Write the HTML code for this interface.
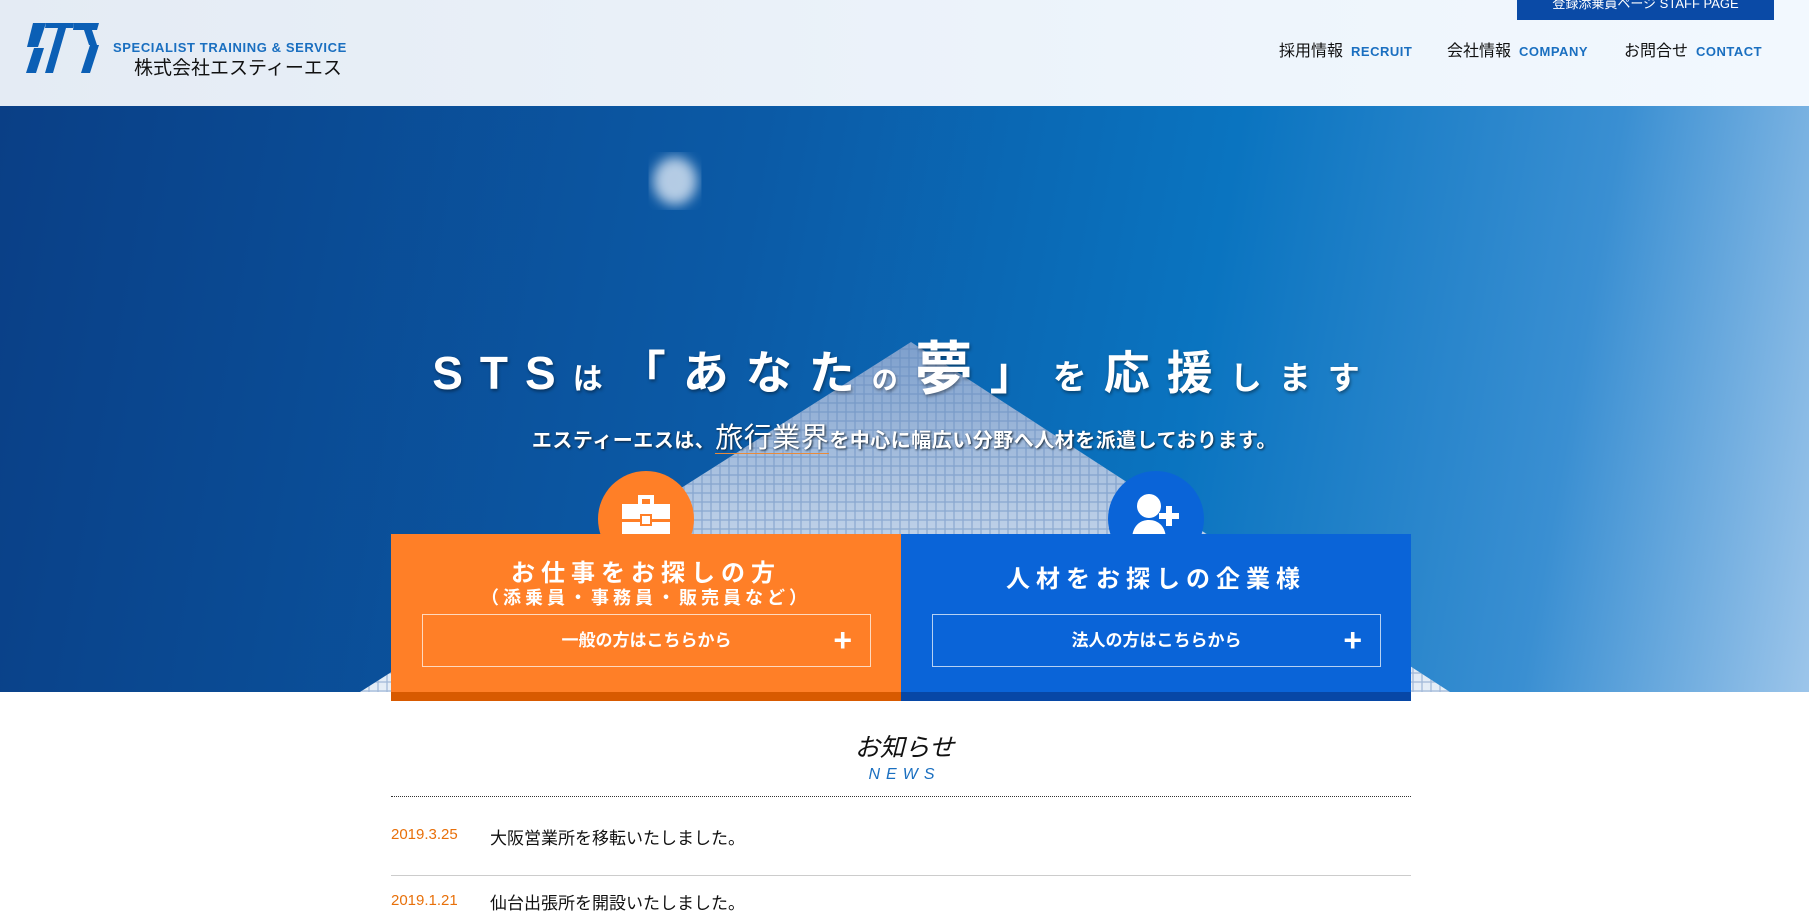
<!DOCTYPE html>
<html><head><meta charset="utf-8"><style>
*{margin:0;padding:0;box-sizing:border-box}
body{width:1809px;height:899px;overflow:hidden;background:#fff;font-family:"Liberation Sans","Noto Sans CJK JP",sans-serif;position:relative}
.hdr{position:absolute;left:0;top:0;width:1809px;height:106px;background:linear-gradient(90deg,#e4ebf4,#eef5fc 70%,#f2f8fe)}
.staff{position:absolute;left:1517px;top:0;width:257px;height:20px;background:#0a4aa6;color:#fff;font-size:13px;line-height:8px;text-align:center;overflow:hidden}
.nav{position:absolute;top:37px;font-size:16px;color:#111}
.nav span{color:#1a6fc0;font-size:13px;font-weight:bold;letter-spacing:0.5px;margin-left:8px}
.hero{position:absolute;left:0;top:106px;width:1809px;height:586px;background:linear-gradient(100deg,#0a3f86 0%,#0b5aa6 40%,#0a74c0 65%,#3a8fd2 85%,#9cc5ea 100%);overflow:hidden}
.h1{position:absolute;left:0;width:1809px;top:322px;text-align:center;color:#fff;font-size:46px;font-weight:bold;letter-spacing:17px;text-shadow:1px 2px 3px rgba(0,0,0,.4)}
.h2{position:absolute;left:0;width:1809px;top:416px;text-align:center;color:#fff;font-size:20px;font-weight:bold;letter-spacing:0.5px;text-shadow:1px 1px 2px #123}
.card{position:absolute;top:534px;width:510px;height:167px;color:#fff;text-align:center}
.card .t{font-size:24px;font-weight:bold;letter-spacing:6px}
.card .btn{position:absolute;left:31px;top:80px;width:449px;height:53px;border:1px solid rgba(255,255,255,.7);font-size:17px;font-weight:bold;line-height:51px}
.card .btn b{position:absolute;right:18px;top:0;font-size:32px;font-weight:bold}
.circ{position:absolute;width:96px;height:96px;border-radius:50%;top:471px}
</style></head><body>
<div class="hdr">
<svg style="position:absolute;left:0;top:0" width="110" height="80" viewBox="0 0 110 80">
<g fill="#0b5fb5">
<polygon points="33,23 46,23 38,47 27,47"/>
<polygon points="34,48 44,48 36,73 26,73"/>
<polygon points="46,23 74,23 73,28 45,28"/>
<polygon points="58,28 66,28 53,73 45,73"/>
<polygon points="74,23 99,23 97,30 73,30"/>
<polygon points="84,30 92,30 97,45 89,45"/>
<polygon points="90,45 99,45 90,73 81,73"/>
</g></svg>
<div style="position:absolute;left:113px;top:40px;font-size:13px;font-weight:bold;color:#1a6fc0;letter-spacing:0.6px">SPECIALIST TRAINING &amp; SERVICE</div>
<div style="position:absolute;left:134px;top:53px;font-size:19px;color:#111">株式会社エスティーエス</div>
<div class="staff">登録添乗員ページ STAFF PAGE</div>
<div class="nav" style="left:1279px">採用情報<span>RECRUIT</span></div>
<div class="nav" style="left:1447px">会社情報<span>COMPANY</span></div>
<div class="nav" style="left:1624px">お問合せ<span>CONTACT</span></div>
</div>
<div class="hero">
<svg width="1809" height="586" style="position:absolute;left:0;top:0">
<defs><linearGradient id="b" x1="0" y1="0" x2="0" y2="1"><stop offset="0" stop-color="#7d9fcc"/><stop offset=".5" stop-color="#b9cde6"/><stop offset="1" stop-color="#e6eef7"/></linearGradient>
<pattern id="g" width="9" height="9" patternUnits="userSpaceOnUse"><rect width="9" height="9" fill="none" stroke="#5f86bb" stroke-width="1.3"/></pattern>
<filter id="bl"><feGaussianBlur stdDeviation="6"/></filter></defs>
<polygon points="911,236 360,586 1450,586" fill="url(#b)"/>
<polygon points="911,236 360,586 1450,586" fill="url(#g)" opacity=".5"/>
<ellipse cx="675" cy="75" rx="22" ry="24" fill="#dfe9f5" opacity=".8" filter="url(#bl)"/>
</svg>
</div>
<div class="h1">STS<span style="font-size:30px">は</span>「あなた<span style="font-size:26px">の</span><span style="font-size:58px">夢</span>」<span style="font-size:34px">を</span>応援<span style="font-size:32px">します</span></div>
<div class="h2">エスティーエスは、<span style="font-size:28px;font-weight:normal;border-bottom:1px solid #e88a3a">旅行業界</span>を中心に幅広い分野へ人材を派遣しております。</div>
<div class="circ" style="left:598px;background:#ff7f27"></div>
<div class="circ" style="left:1108px;background:#0a64d8"></div>
<svg style="position:absolute;left:622px;top:495px" width="48" height="46" viewBox="0 0 48 46"><path d="M16 0h16v9h-4v-5h-8v5h-4z" fill="#fff"/><rect x="0" y="9" width="48" height="15" fill="#fff"/><rect x="0" y="27" width="48" height="19" fill="#fff"/><rect x="19" y="20" width="10" height="10" fill="#fff" stroke="#ff7f27" stroke-width="2"/></svg>
<svg style="position:absolute;left:1132px;top:492px" width="50" height="48" viewBox="0 0 50 48"><circle cx="17" cy="14" r="12" fill="#fff"/><path d="M0 48c0-14 8-20 17-20s17 6 17 20z" fill="#fff"/><path d="M34 14h6v7h7v6h-7v7h-6v-7h-7v-6h7z" fill="#fff"/></svg>
<div class="card" style="left:391px;background:#ff7f27;border-bottom:9px solid #d85a00">
<div class="t" style="margin-top:26px;line-height:28px">お仕事をお探しの方</div>
<div style="font-size:18px;font-weight:bold;letter-spacing:4px;line-height:20px">（添乗員・事務員・販売員など）</div>
<div class="btn">一般の方はこちらから<b>+</b></div></div>
<div class="card" style="left:901px;background:#0a64d8;border-bottom:9px solid #0747a6">
<div class="t" style="margin-top:28px;line-height:36px">人材をお探しの企業様</div>
<div class="btn">法人の方はこちらから<b>+</b></div></div>
<div style="position:absolute;left:0;width:1809px;top:728px;text-align:center;font-size:25px;font-style:italic;color:#111">お知らせ</div>
<div style="position:absolute;left:0;width:1809px;top:766px;text-align:center;font-size:16px;font-style:italic;color:#1a6fc0;letter-spacing:6px">NEWS</div>
<div style="position:absolute;left:391px;width:1020px;top:796px;border-top:1px dotted #333;height:1px"></div>
<div style="position:absolute;left:391px;top:826px;font-size:15px;color:#e8700a">2019.3.25</div>
<div style="position:absolute;left:490px;top:824px;font-size:17px;color:#111">大阪営業所を移転いたしました。</div>
<div style="position:absolute;left:391px;width:1020px;top:875px;border-top:1px solid #ccc"></div>
<div style="position:absolute;left:391px;top:892px;font-size:15px;color:#e8700a">2019.1.21</div>
<div style="position:absolute;left:490px;top:889px;font-size:17px;color:#111">仙台出張所を開設いたしました。</div>
</body></html>
